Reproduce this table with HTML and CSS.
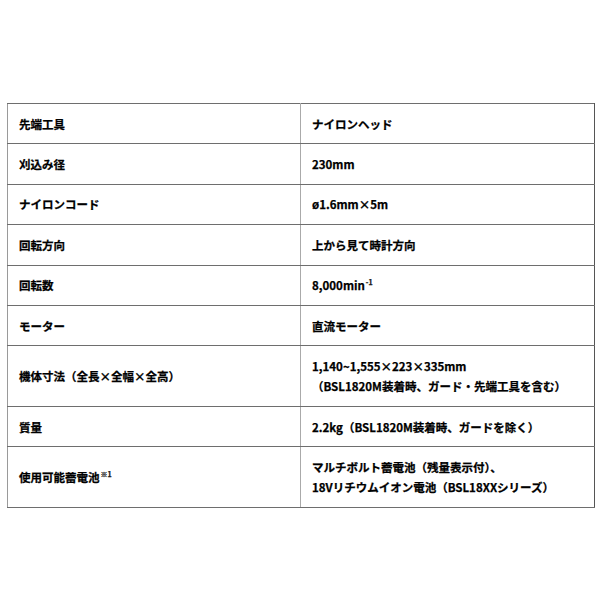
FILE: index.html
```html
<!DOCTYPE html>
<html lang="ja">
<head>
<meta charset="utf-8">
<link rel="stylesheet" href="styles.css">
</head>
<body>
<table class="spec">
  <tr class="r1"><th>先端工具</th><td>ナイロンヘッド</td></tr>
  <tr class="r1"><th>刈込み径</th><td>230mm</td></tr>
  <tr class="r1"><th>ナイロンコード</th><td>ø1.6mm×5m</td></tr>
  <tr class="r1"><th>回転方向</th><td>上から見て時計方向</td></tr>
  <tr class="r1"><th>回転数</th><td>8,000min<sup>-1</sup></td></tr>
  <tr class="r1"><th>モーター</th><td>直流モーター</td></tr>
  <tr class="r2"><th>機体寸法（全長×全幅×全高）</th><td>1,140~1,555×223×335mm<br>（BSL1820M装着時、ガード・先端工具を含む）</td></tr>
  <tr class="r1"><th>質量</th><td>2.2kg（BSL1820M装着時、ガードを除く）</td></tr>
  <tr class="r2"><th>使用可能蓄電池<sup>※1</sup></th><td>マルチボルト蓄電池（残量表示付）、<br>18Vリチウムイオン電池（BSL18XXシリーズ）</td></tr>
</table>
</body>
</html>
```
FILE: styles.css
```css
html, body {
  margin: 0;
  padding: 0;
  background: #fff;
}
body {
  padding: 103px 0 0 7px;
  font-family: "Noto Sans CJK JP", "Noto Sans", sans-serif;
  font-weight: 700;
  font-size: 11.5px;
  color: #000;
  -webkit-text-stroke: 0.25px #000;
}
.spec {
  border-collapse: collapse;
  width: 588px;
  table-layout: fixed;
  border-top: 1px solid #6e6e6e;
  border-left: 1px solid #9a9a9a;
  border-right: 1px solid #555;
}
.spec th,
.spec td {
  text-align: left;
  font-weight: 700;
  padding: 0 0 0 11px;
  line-height: 20px;
  border-bottom: 1px solid #6e6e6e;
  vertical-align: middle;
}
.spec th {
  width: 281px;
  border-right: 1px solid #aaa;
}
.r1 { height: 40.4px; }
.r2 { height: 60.6px; }
sup {
  font-size: 7px;
  line-height: 0;
  vertical-align: 5px;
  margin-left: 1px;
  color: #222;
}
```
